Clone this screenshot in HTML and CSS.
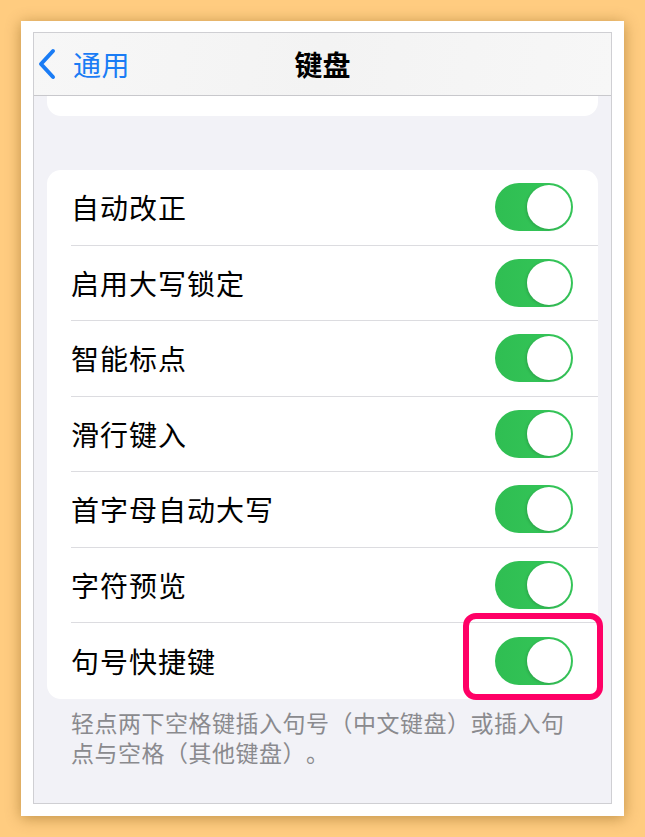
FILE: index.html
```html
<!DOCTYPE html>
<html lang="zh-CN">
<head>
<meta charset="utf-8">
<title>键盘</title>
<link rel="stylesheet" href="styles.css">
</head>
<body>
<div class="frame">
  <div class="screen">
    <header class="nav">
      <a class="back">
        <svg class="chevron" width="20" height="32" viewBox="0 0 20 32"><path d="M16 3 L4 16 L16 29" fill="none" stroke="#1a7cf5" stroke-width="4" stroke-linecap="round" stroke-linejoin="round"/></svg>
        <span>通用</span>
      </a>
      <h1 class="title">键盘</h1>
    </header>
    <div class="card stub"></div>
    <ul class="card list">
      <li class="row"><span class="label">自动改正</span><span class="switch"></span></li>
      <li class="row"><span class="label">启用大写锁定</span><span class="switch"></span></li>
      <li class="row"><span class="label">智能标点</span><span class="switch"></span></li>
      <li class="row"><span class="label">滑行键入</span><span class="switch"></span></li>
      <li class="row"><span class="label">首字母自动大写</span><span class="switch"></span></li>
      <li class="row"><span class="label">字符预览</span><span class="switch"></span></li>
      <li class="row"><span class="label">句号快捷键</span><span class="switch marked"></span></li>
    </ul>
    <p class="note">轻点两下空格键插入句号（中文键盘）或插入句点与空格（其他键盘）。</p>
  </div>
</div>
</body>
</html>
```
FILE: styles.css
```css
html, body {
  margin: 0;
  padding: 0;
}
body {
  background: #ffcc80;
  width: 645px;
  height: 837px;
  overflow: hidden;
  font-family: "Noto Sans CJK SC", "Noto Sans", sans-serif;
}
.frame {
  margin: 21px 0 0 21px;
  width: 603px;
  height: 795px;
  box-sizing: border-box;
  padding: 11px 12px;
  background: #fff;
  box-shadow: 0 2px 14px rgba(110, 70, 0, 0.45);
}
.screen {
  height: 772px;
  box-sizing: border-box;
  border: 1px solid #cfcfd3;
  background: #f2f2f7;
  overflow: hidden;
}
.nav {
  height: 63px;
  box-sizing: border-box;
  border-bottom: 1px solid #c8c8cc;
  background: linear-gradient(100deg, #f7f7f7, #f3f3f3 50%, #f7f7f7);
  position: relative;
  display: flex;
  align-items: center;
}
.back {
  display: flex;
  align-items: center;
  gap: 16px;
  padding-left: 3px;
  color: #1a7cf5;
  font-size: 28px;
  letter-spacing: 0.5px;
  line-height: 1;
}
.chevron {
  display: block;
}
.title {
  position: absolute;
  left: 0;
  right: 0;
  top: 0;
  bottom: 0;
  margin: 0;
  display: flex;
  align-items: center;
  justify-content: center;
  font-size: 28px;
  font-weight: 700;
  color: #000;
  pointer-events: none;
}
.card {
  background: #fff;
  margin: 0 13px;
  border-radius: 14px;
}
.stub {
  height: 20px;
  border-radius: 0 0 14px 14px;
}
.list {
  list-style: none;
  padding: 0;
  margin-top: 54px;
}
.row {
  height: 75.5px;
  display: flex;
  align-items: center;
  justify-content: space-between;
  margin-left: 24px;
  padding-right: 25px;
  box-sizing: border-box;
  border-bottom: 1px solid #dcdce0;
}
.row:last-child {
  border-bottom: none;
}
.label {
  font-size: 28px;
  color: #000;
  letter-spacing: 1px;
}
.switch {
  position: relative;
  width: 78px;
  height: 48px;
  border-radius: 24px;
  background: linear-gradient(90deg, #2fbe52, #36c75a);
}
.switch::after {
  content: "";
  position: absolute;
  right: 2px;
  top: 2px;
  width: 44px;
  height: 44px;
  border-radius: 50%;
  background: #fff;
  box-shadow: -1px 1px 3px rgba(0, 0, 0, 0.15);
}
.switch.marked::before {
  content: "";
  position: absolute;
  left: -32px;
  right: -30px;
  top: -24px;
  bottom: -15px;
  border: 6px solid #ff0066;
  border-radius: 13px;
}
.note {
  margin: 8px 0 0 37px;
  width: 505px;
  font-size: 23px;
  letter-spacing: 0.5px;
  line-height: 30px;
  color: #8a8a8e;
  text-spacing-trim: space-all;
  font-feature-settings: "halt" 0, "chws" 0;
}
```
